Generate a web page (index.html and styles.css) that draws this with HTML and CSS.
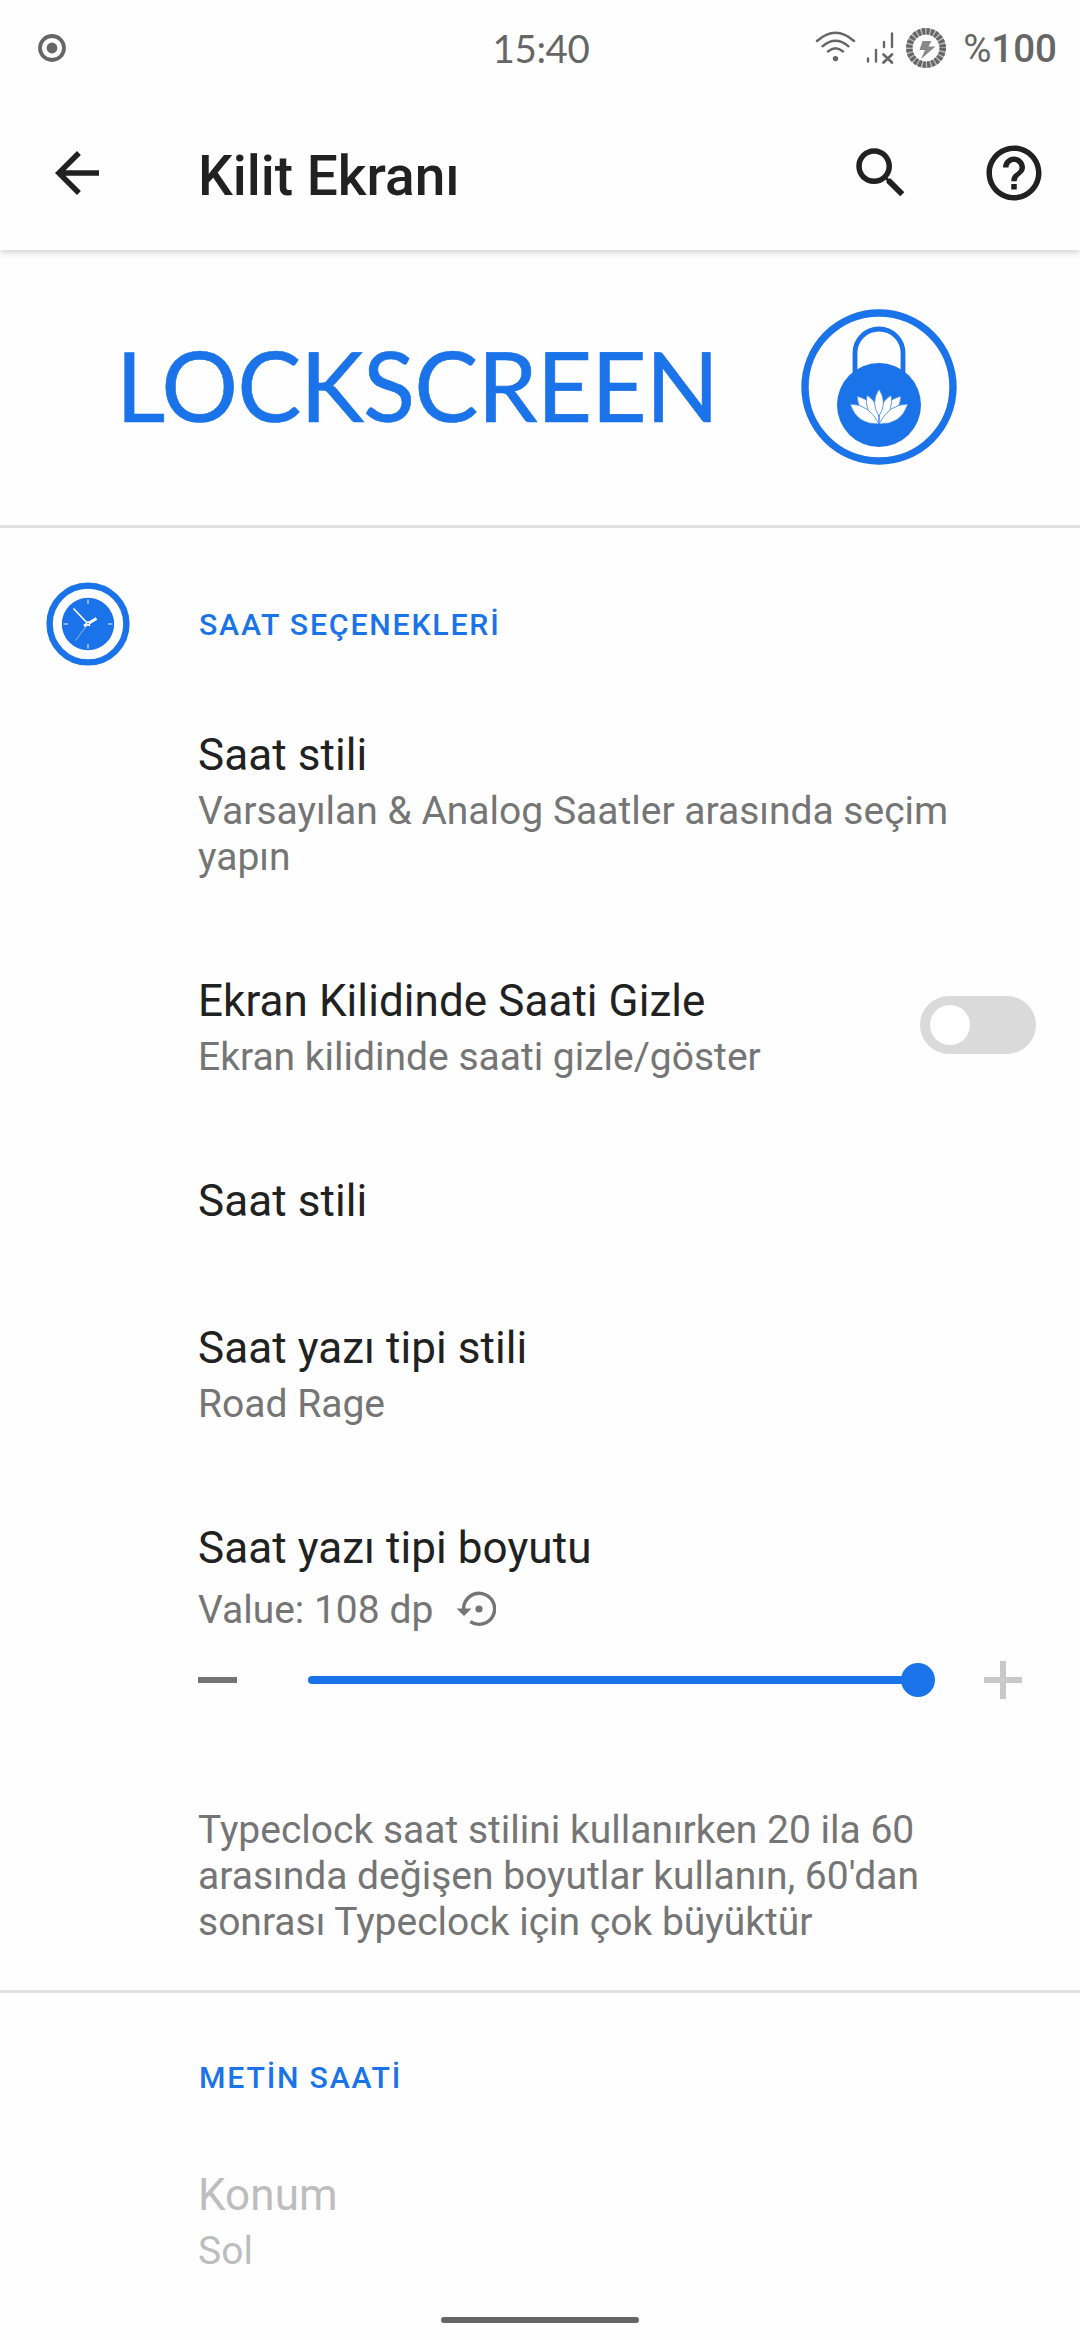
FILE: index.html
```html
<!DOCTYPE html>
<html lang="tr">
<head>
<meta charset="utf-8">
<title>Kilit Ekranı</title>
<link rel="stylesheet" href="styles.css">
</head>
<body>
<div class="screen">
  <div class="status-bar">
    <svg class="status-dot" width="28" height="28" viewBox="0 0 28 28"><circle cx="14" cy="14" r="12" fill="none" stroke="#666" stroke-width="3.8"/><circle cx="14" cy="14" r="5.4" fill="#666"/></svg>
    <span class="time">15:40</span>
    <div class="status-icons">
      <svg width="134" height="44" viewBox="0 0 134 44" fill="none" stroke="#666" stroke-width="2.4" stroke-linecap="round">
        <path d="M2 15Q20.500 -1.500 39 15M7.500 20.300Q20.500 9 33.500 20.300M13 25.500Q20.500 19 28 25.500"/>
        <circle cx="20.500" cy="32.600" r="2.700" fill="#666" stroke="none"/>
        <path d="M53 32.500V35.500M61 24V35.500M69 16V21M77 7.500V21"/>
        <path d="M68.500 28.500L77 36.500M77 28.500L68.500 36.500" stroke-width="2.700"/>
        <circle cx="111" cy="22" r="16.700" stroke="#bbb" stroke-width="6.500"/>
        <circle cx="111" cy="22" r="16.700" stroke-width="6.500" stroke-linecap="butt" stroke-dasharray="3 1.372"/>
        <path d="M107.500 15H116.500L113.500 20.500H120.500L106 33L110 24H104.500Z" fill="#888" stroke="none"/>
      </svg>
      <span class="battery"><span class="percent">%</span>100</span>
    </div>
  </div>
  <header class="toolbar">
    <svg class="back" width="66" height="66" viewBox="0 0 24 24" fill="#212121"><path d="M20 11H7.830l5.590-5.590L12 4l-8 8 8 8 1.410-1.410L7.830 13H20v-2z"/></svg>
    <h1>Kilit Ekranı</h1>
    <svg class="search" width="66" height="66" viewBox="0 0 24 24" fill="#212121"><path d="M15.500 14h-.79l-.28-.27C15.410 12.590 16 11.110 16 9.500 16 5.910 13.090 3 9.500 3S3 5.910 3 9.500 5.910 16 9.500 16c1.610 0 3.090-.59 4.230-1.570l.27.28v.79l5 4.990L20.490 19l-4.990-5zm-6 0C7.010 14 5 11.990 5 9.500S7.010 5 9.500 5 14 7.010 14 9.500 11.990 14 9.500 14z"/></svg>
    <svg class="help" width="66" height="66" viewBox="0 0 24 24" fill="#212121"><path d="M11 18h2v-2h-2v2zm1-16C6.480 2 2 6.480 2 12s4.480 10 10 10 10-4.480 10-10S17.520 2 12 2zm0 18c-4.410 0-8-3.590-8-8s3.590-8 8-8 8 3.590 8 8-3.590 8-8 8zm0-14c-2.210 0-4 1.790-4 4h2c0-1.100.9-2 2-2s2 .9 2 2c0 2-3 1.750-3 5h2c0-2.250 3-2.500 3-5 0-2.210-1.790-4-4-4z"/></svg>
  </header>
  <div class="banner">
    <span class="wordmark">LOCKSCREEN</span>
    <svg width="156" height="156" viewBox="0 0 156 156">
      <circle cx="78" cy="78" r="74" fill="none" stroke="#1a73e8" stroke-width="7.400"/>
      <path d="M54 70V44A24 24 0 0 1 102 44V70" fill="none" stroke="#1a73e8" stroke-width="4.800"/>
      <circle cx="78" cy="96" r="42" fill="#1a73e8"/>
      <g fill="#fff" stroke="#1a73e8" stroke-width=".7">
        <path d="M78 115Q56 103 56 87Q76 92 78 115ZM78 115Q100 103 100 87Q80 92 78 115Z"/>
        <path d="M78 115Q62 101 66 86Q80 95 78 115ZM78 115Q94 101 90 86Q76 95 78 115Z"/>
        <path d="M78 107Q69 94 78 80Q87 94 78 107Z"/>
        <path d="M78 115Q56 116 49 95Q68 95 78 115ZM78 115Q100 116 107 95Q88 95 78 115Z"/>
      </g>
    </svg>
  </div>
  <section class="group">
    <div class="category">
      <svg class="category-icon" width="84" height="84" viewBox="0 0 84 84">
        <circle cx="42" cy="42" r="38.400" fill="none" stroke="#1a73e8" stroke-width="6.400"/>
        <circle cx="42" cy="42" r="26.200" fill="#1a73e8"/>
        <g stroke="#fff" fill="none">
          <path d="M42 17.500V22M42 62V66.500M17.500 42H22M62 42H66.500" stroke="#a9cbfa" stroke-width="1.500"/>
          <path d="M27.500 26.500L44 44" stroke-width="1.600"/>
          <path d="M38 44L50.500 36.500" stroke-width="2.800"/>
          <path d="M45 38L29.500 58.500" stroke="#a9cbfa" stroke-width=".8"/>
        </g>
        <circle cx="42" cy="41.500" r="2.200" fill="#fff"/><circle cx="42" cy="41.500" r=".8" fill="#1a73e8"/>
      </svg>
      <h2>SAAT SEÇENEKLERİ</h2>
    </div>
    <div class="item"><div class="title">Saat stili</div><div class="summary">Varsayılan &amp; Analog Saatler arasında seçim yapın</div></div>
    <div class="item with-switch">
      <div><div class="title">Ekran Kilidinde Saati Gizle</div><div class="summary">Ekran kilidinde saati gizle/göster</div></div>
      <div class="switch"><div class="knob"></div></div>
    </div>
    <div class="item"><div class="title">Saat stili</div></div>
    <div class="item"><div class="title">Saat yazı tipi stili</div><div class="summary">Road Rage</div></div>
    <div class="item size-item">
      <div class="title">Saat yazı tipi boyutu</div>
      <div class="value"><span>Value: 108 dp</span>
        <svg width="40" height="38" viewBox="0 0 40 38"><path d="M7.600 19A15.500 15.500 0 1 1 14.300 31.600" fill="none" stroke="#757575" stroke-width="3.400"/><path d="M.5 18.500H15.500L8 26Z" fill="#757575"/><circle cx="23" cy="19" r="3.600" fill="#757575"/></svg>
      </div>
      <div class="slider">
        <div class="minus"></div>
        <div class="track"><div class="thumb"></div></div>
        <svg width="38" height="38" viewBox="0 0 38 38"><path d="M0 19H38M19 0V38" stroke="#c8c8c8" stroke-width="6"/></svg>
      </div>
    </div>
    <p class="note">Typeclock saat stilini kullanırken 20 ila 60 arasında değişen boyutlar kullanın, 60'dan sonrası Typeclock için çok büyüktür</p>
  </section>
  <section class="group">
    <div class="category second"><h2>METİN SAATİ</h2></div>
    <div class="item disabled"><div class="title">Konum</div><div class="summary">Sol</div></div>
  </section>
  <div class="home-bar"></div>
</div>
</body>
</html>
```
FILE: styles.css
```css
* { box-sizing: border-box; }
body { margin: 0; background: #fefefe; font-family: Roboto, sans-serif; color: #212121; }
h1, h2, p { margin: 0; font-weight: 500; }
svg { display: block; flex: none; }
.screen { position: relative; width: 1080px; height: 2340px; overflow: hidden; }

.status-bar { height: 96px; display: grid; grid-template-columns: 1fr auto 1fr; align-items: center; padding: 0 23px 0 38px; color: #666; font-size: 38.5px; }
.time { font-family: Lato, sans-serif; line-height: 46px; padding-right: 13px; letter-spacing: -.4px; }
.status-icons { display: flex; align-items: center; justify-content: flex-end; gap: 14px; height: 44px; }
.battery { font-weight: 500; line-height: 44px; padding-top: 2px; }
.percent { font-weight: 400; }

.toolbar { height: 154px; display: flex; align-items: center; padding: 0 33px 0 44px; box-shadow: 0 2px 7px rgba(0, 0, 0, .2); clip-path: inset(0 0 -20px 0); }
.toolbar .back { margin-right: 88px; }
.toolbar h1 { flex: 1; font-size: 55px; line-height: 64px; padding-top: 5px; }
.toolbar .search { margin-right: 67px; }

.banner { height: 278px; display: flex; align-items: flex-start; justify-content: space-between; padding: 59px 123px 0 116px; border-bottom: 3px solid #e0e0e0; }
.wordmark { font-family: Lato, sans-serif; font-size: 96px; line-height: 152px; letter-spacing: -.9px; color: #1a73e8; -webkit-text-stroke: .6px #1a73e8; }

.group { border-bottom: 3px solid #e0e0e0; }
.group:last-of-type { border: 0; }
.category { height: 153px; display: flex; align-items: flex-start; padding: 54px 0 0 46px; }
.category-icon { margin-right: 69px; }
.category h2 { font-size: 30.25px; line-height: 36px; letter-spacing: 1.8px; color: #1a73e8; margin-top: 25px; }
.category.second { height: 128px; padding: 42px 0 0 199px; }
.item { padding: 48px 110px 47px 198px; }
.title { font-size: 44px; line-height: 52px; letter-spacing: .07px; }
.summary, .value, .note { font-size: 39px; line-height: 46px; color: #757575; }
.summary { margin-top: 7px; }
.with-switch { display: flex; justify-content: space-between; align-items: center; padding-right: 44px; }
.switch { width: 116px; height: 58px; margin-top: -5px; border-radius: 29px; background: #dadada; padding: 9px 10px; }
.knob { width: 40px; height: 40px; border-radius: 50%; background: #fff; }
.size-item { padding: 48px 58px 0 198px; }
.value { display: flex; align-items: center; gap: 23px; margin-top: 13px; }
.value svg { margin-top: -3px; }
.slider { display: flex; align-items: center; height: 38px; margin-top: 28px; }
.minus { width: 39px; height: 6px; background: #757575; }
.track { flex: none; width: 610px; height: 8px; margin: 0 66px 0 71px; border-radius: 4px; background: #1a73e8; display: flex; align-items: center; justify-content: flex-end; }
.thumb { flex: none; width: 34px; height: 34px; margin-right: -17px; border-radius: 50%; background: #1a73e8; }
.note { font-weight: 400; padding: 108px 130px 45px 198px; }
.disabled .title, .disabled .summary { color: #bdbdbd; }
.home-bar { position: absolute; left: 441px; top: 2317px; width: 198px; height: 6px; border-radius: 3px; background: #666; }
```
